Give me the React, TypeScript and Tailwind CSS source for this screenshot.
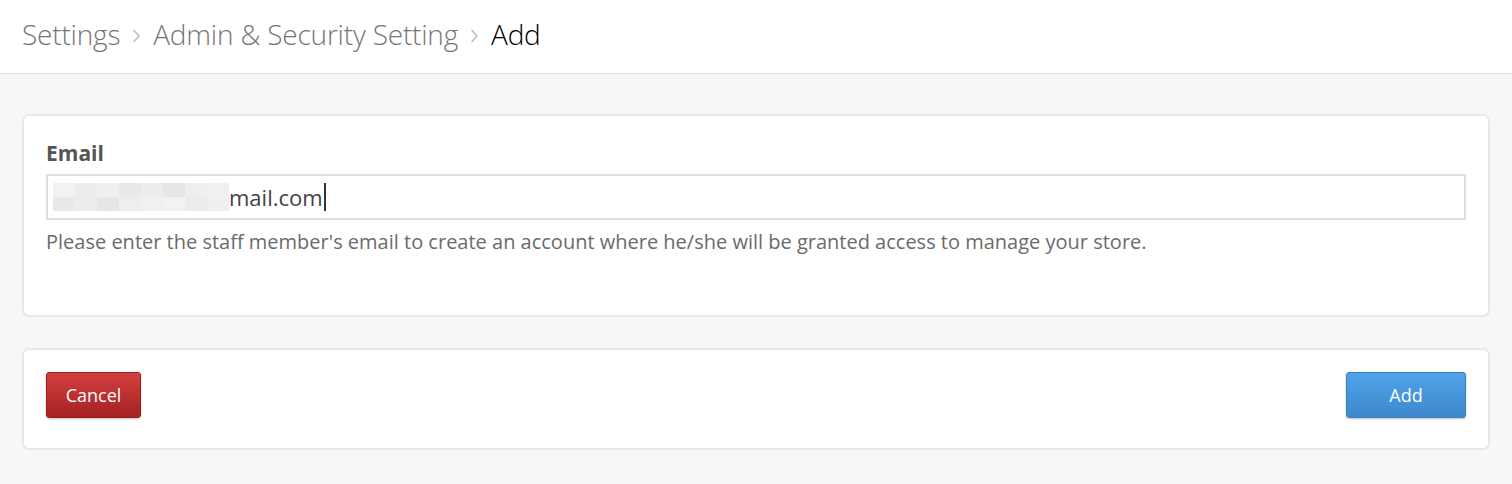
import React from 'react';

const font = { fontFamily: '"Open Sans", "Liberation Sans", sans-serif' };

const Chevron = () => (
    <svg width="9" height="18" viewBox="0 0 9 18" className="mx-[12px] mt-[3px]" fill="none">
        <path d="M1.5 3 L7 9 L1.5 15" stroke="#b4b9c0" strokeWidth="1.4" />
    </svg>
);

const Crumb = ({ children, last }: { children: React.ReactNode; last?: boolean }) => (
    <>
        <span className={last ? 'text-black' : 'text-[#767676]'}>{children}</span>
        {!last && <Chevron />}
    </>
);

// redacted part of the address, drawn as pixel blocks
const blocks = ['#f2f2f2', '#ececec', '#efefef', '#e9e9e9', '#ededed', '#e6e6e6', '#eeeeee', '#f0f0f0'];

const App = () => {
    return (
        <div className="min-h-[484px] bg-[#f7f7f7]" style={font}>
            <div className="h-[74px] bg-white border-b border-[#e2e2e2] flex items-center px-[22px]">
                <div className="flex items-center text-[28px] font-light tracking-[-0.2px] -mt-[5px]">
                    <Crumb>Settings</Crumb>
                    <Crumb>Admin &amp; Security Setting</Crumb>
                    <Crumb last>Add</Crumb>
                </div>
            </div>

            <div className="px-[22px] pt-[40px] space-y-[31px]">
                <div className="bg-white border-2 border-[#e8e8e8] rounded-[7px] h-[203px] px-[22px] pt-[22px]">
                    <label className="block text-[21px] font-bold text-[#555] leading-[30px]">Email</label>
                    <div className="mt-[6px] h-[46px] border-2 border-[#dedede] flex items-center pl-[5px]">
                        <div className="flex h-[28px]">
                            {blocks.map((c, i) => (
                                <div key={i} className="w-[22px] flex flex-col">
                                    <div className="h-[14px]" style={{ backgroundColor: c }} />
                                    <div className="h-[14px]" style={{ backgroundColor: blocks[(i + 3) % blocks.length] }} />
                                </div>
                            ))}
                        </div>
                        <span className="text-[22px] text-[#444]">mail.com</span>
                        <span className="w-[2px] h-[28px] bg-[#333] ml-[1px]" />
                    </div>
                    <p className="mt-[8px] text-[20px] text-[#6b6b6b] leading-[28px]">
                        Please enter the staff member's email to create an account where he/she will be granted access to manage your store.
                    </p>
                </div>

                <div className="bg-white border-2 border-[#e8e8e8] rounded-[7px] h-[102px] px-[22px] pt-[22px] flex items-start justify-between">
                    <button className="h-[46px] w-[95px] rounded-[3px] text-white text-[18px] bg-gradient-to-b from-[#d53e3e] to-[#a32222] border border-[#9a2020] shadow-[0_1px_2px_rgba(0,0,0,0.25)]">
                        Cancel
                    </button>
                    <button className="h-[46px] w-[120px] rounded-[3px] text-white text-[18px] bg-gradient-to-b from-[#4fa3ea] to-[#3e88cb] border border-[#3a7fbf] shadow-[0_1px_2px_rgba(0,0,0,0.25)]">
                        Add
                    </button>
                </div>
            </div>
        </div>
    );
};

export default App;
